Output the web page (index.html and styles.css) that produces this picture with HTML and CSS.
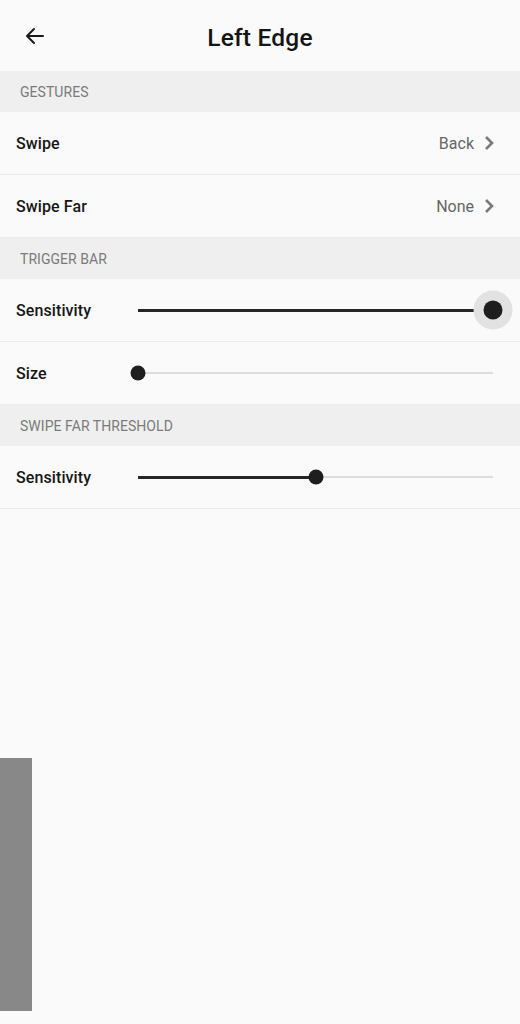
FILE: index.html
```html
<!DOCTYPE html>
<html>
<head>
<meta charset="utf-8">
<link rel="stylesheet" href="styles.css">
</head>
<body>
<div class="screen">
  <header class="appbar">
    <span class="back">
      <svg width="24" height="24" viewBox="0 0 24 24"><path d="M20 12H4.5M11 5l-7 7 7 7" fill="none" stroke="#1a1a1a" stroke-width="2" stroke-linecap="round" stroke-linejoin="round"/></svg>
    </span>
    <h1 class="title">Left Edge</h1>
  </header>

  <div class="section">GESTURES</div>
  <div class="row">
    <span class="label">Swipe</span>
    <span class="value">Back <svg class="chev" width="10" height="16" viewBox="0 0 10 16"><path d="M2 2l6 6-6 6" fill="none" stroke="#7a7a7a" stroke-width="2.6"/></svg></span>
  </div>
  <div class="row">
    <span class="label">Swipe Far</span>
    <span class="value">None <svg class="chev" width="10" height="16" viewBox="0 0 10 16"><path d="M2 2l6 6-6 6" fill="none" stroke="#7a7a7a" stroke-width="2.6"/></svg></span>
  </div>

  <div class="section">TRIGGER BAR</div>
  <div class="row slider-row">
    <span class="label">Sensitivity</span>
    <div class="slider">
      <div class="track"><div class="fill" style="width:100%"></div><span class="thumb active" style="left:100%"></span></div>
    </div>
  </div>
  <div class="row slider-row">
    <span class="label">Size</span>
    <div class="slider">
      <div class="track"><div class="fill" style="width:0%"></div><span class="thumb" style="left:0%"></span></div>
    </div>
  </div>

  <div class="section">SWIPE FAR THRESHOLD</div>
  <div class="row slider-row">
    <span class="label">Sensitivity</span>
    <div class="slider">
      <div class="track"><div class="fill" style="width:50%"></div><span class="thumb" style="left:50%"></span></div>
    </div>
  </div>

  <div class="edge-bar"></div>
</div>
</body>
</html>
```

FILE: styles.css
```css
html, body {
  margin: 0;
  padding: 0;
  background: #fafafa;
}
body {
  font-family: Roboto, "Noto Sans", sans-serif;
  color: #151515;
}
.screen {
  width: 520px;
  height: 1024px;
  position: relative;
  overflow: hidden;
  background: #fafafa;
}
.appbar {
  height: 71px;
  display: flex;
  align-items: center;
  position: relative;
}
.back {
  position: absolute;
  left: 23px;
  top: 24px;
  width: 24px;
  height: 24px;
}
.title {
  flex: 1;
  margin: 0;
  text-align: center;
  font-size: 24.5px;
  font-weight: 500;
  color: #141414;
  letter-spacing: 0.2px;
  padding-top: 3px;
}
.section {
  height: 41px;
  background: #efefef;
  display: flex;
  align-items: center;
  padding-left: 20px;
  font-size: 14px;
  color: #7a7a7a;
  letter-spacing: 0.05px;
}
.row {
  height: 62px;
  border-bottom: 1px solid #ececec;
  display: flex;
  align-items: center;
  padding: 0 26px 0 16px;
}
.label {
  font-size: 16px;
  font-weight: 500;
  color: #161616;
  letter-spacing: 0.1px;
}
.value {
  margin-left: auto;
  display: flex;
  align-items: center;
  gap: 10px;
  font-size: 16px;
  color: #666;
}
.chev {
  display: block;
}
.slider-row {
  padding-right: 27px;
}
.slider-row .label {
  width: 122px;
  flex: none;
}
.slider {
  flex: 1;
  display: flex;
  align-items: center;
  height: 40px;
}
.track {
  position: relative;
  width: 100%;
  height: 2px;
  background: #dcdcdc;
}
.fill {
  height: 3px;
  margin-top: -0.5px;
  background: #262626;
}
.thumb {
  position: absolute;
  top: 50%;
  width: 15px;
  height: 15px;
  border-radius: 50%;
  background: #1e1e1e;
  transform: translate(-50%, -50%);
}
.thumb.active {
  width: 19px;
  height: 19px;
  box-shadow: 0 0 0 10px #e2e2e2;
}
.edge-bar {
  position: absolute;
  left: 0;
  top: 758px;
  width: 32px;
  height: 253px;
  background: #888888;
}
```
